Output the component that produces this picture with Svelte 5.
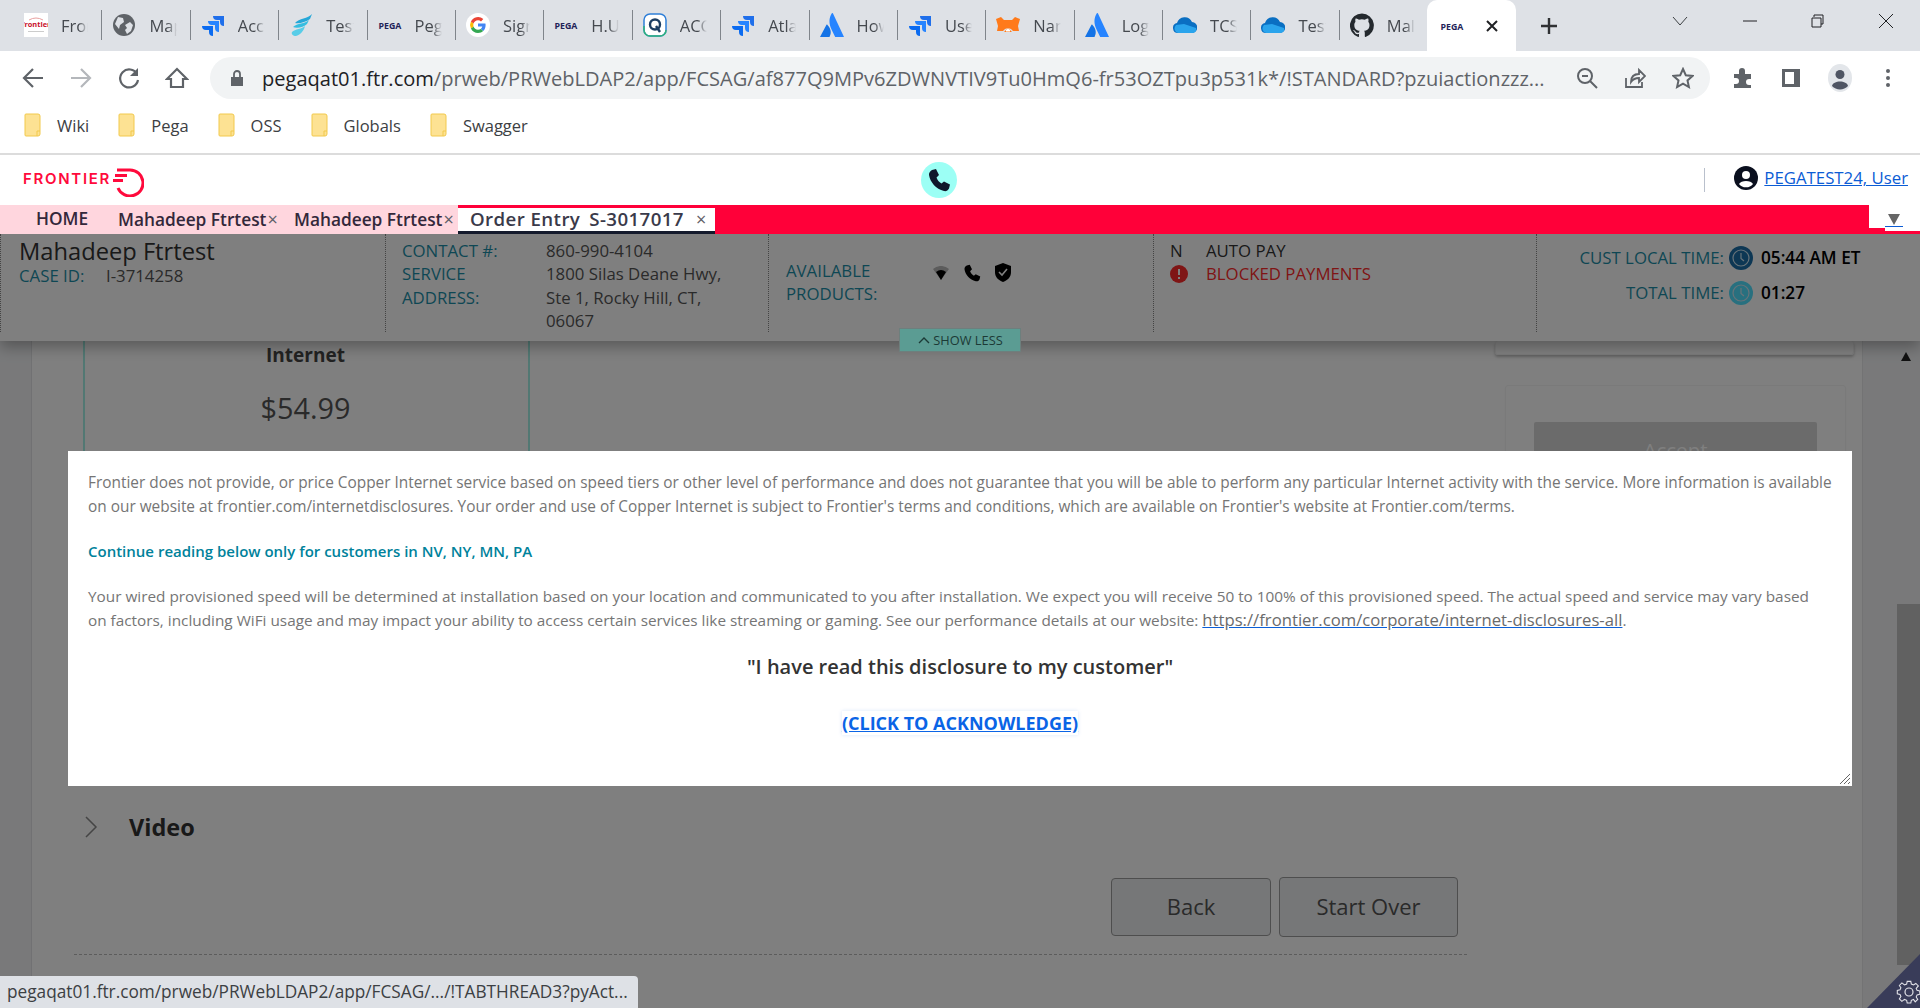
<script>
  const tabs = [
    { icon: "frontier", title: "Frontier" },
    { icon: "globe", title: "Maps" },
    { icon: "jira", title: "Access" },
    { icon: "wing", title: "Test" },
    { icon: "pega", title: "Pega" },
    { icon: "google", title: "Sign" },
    { icon: "pega", title: "H.U" },
    { icon: "qtest", title: "ACC" },
    { icon: "jira", title: "Atlas" },
    { icon: "atlassian", title: "How" },
    { icon: "jira", title: "User" },
    { icon: "fox", title: "Name" },
    { icon: "atlassian", title: "Log" },
    { icon: "cloud", title: "TCS" },
    { icon: "cloud", title: "Test" },
    { icon: "github", title: "Mal" }
  ];
  const bookmarks = ["Wiki", "Pega", "OSS", "Globals", "Swagger"];
</script>

<svg class="defs" aria-hidden="true">
  <symbol id="frontier" viewBox="0 0 24 24">
    <rect width="24" height="24" fill="#fff" />
    <path d="M5 7q7-4 14 0" fill="none" stroke="#e8a0a0" stroke-width="1" />
    <text x="12" y="14" font-size="7.400" font-weight="700" fill="#c8102e" text-anchor="middle" font-family="Open Sans">frontier</text>
    <rect x="4" y="18" width="16" height="1" fill="#ccc" />
  </symbol>
  <symbol id="globe" viewBox="0 0 24 24">
    <circle cx="12" cy="12" r="11" fill="#5f6368" />
    <path d="M6 4l5 1 1 4-4 3-1 4-4-5zM18 9l3 3-2 6-4 3-2-4 2-2-2-3z" fill="#dee1e6" />
  </symbol>
  <symbol id="jira" viewBox="0 0 24 24">
    <path d="M12 3h11v10a4 4 0 0 1-4-4V7h-3a4 4 0 0 1-4-4z" fill="#1f6feb" />
    <path d="M7 8h11v11a4 4 0 0 1-4-4v-3h-3a4 4 0 0 1-4-4z" fill="#2684ff" />
    <path d="M1 13h11v10a4 4 0 0 1-4-4v-2H5a4 4 0 0 1-4-4z" fill="#0b6bf0" />
  </symbol>
  <symbol id="wing" viewBox="0 0 24 24">
    <path d="M23 1C19 6 10 5 6 10c4 1 11-1 15-4z" fill="#25a7d8" />
    <path d="M20 7c-4 4-12 3-16 7 4 2 11 0 14-3z" fill="#35bde0" />
    <path d="M16 13c-3 3-10 3-13 6-1 2 1 4 4 4 4-1 8-5 9-10z" fill="#58cde8" />
  </symbol>
  <symbol id="pega" viewBox="0 0 24 24">
    <text x="12" y="15.500" font-size="8.800" font-weight="700" fill="#1e2358" text-anchor="middle" font-family="Open Sans">PEGA</text>
  </symbol>
  <symbol id="google" viewBox="0 0 24 24">
    <circle cx="12" cy="12" r="12" fill="#fff" />
    <path d="M19.600 12.200c0-.6 0-1.100-.2-1.600H12v3h4.300a3.700 3.700 0 0 1-1.600 2.400l2.500 2c1.500-1.400 2.400-3.400 2.400-5.800z" fill="#4285f4" />
    <path d="M12 20c2.200 0 4-.7 5.200-2l-2.500-2c-.7.500-1.600.8-2.700.8-2.100 0-3.900-1.400-4.500-3.300l-2.600 2A8 8 0 0 0 12 20z" fill="#34a853" />
    <path d="M7.500 13.500a4.800 4.800 0 0 1 0-3l-2.600-2a8 8 0 0 0 0 7z" fill="#fbbc05" />
    <path d="M12 7.200c1.200 0 2.200.4 3 1.200l2.300-2.300A8 8 0 0 0 4.900 8.500l2.600 2c.6-1.900 2.400-3.300 4.500-3.300z" fill="#ea4335" />
  </symbol>
  <symbol id="qtest" viewBox="0 0 24 24">
    <rect x="1" y="1" width="22" height="22" rx="6" fill="#fff" stroke="#2f7fd8" stroke-width="1.500" />
    <path d="M1 13v4a6 6 0 0 0 6 6h10a6 6 0 0 0 6-6" fill="none" stroke="#2fb37c" stroke-width="1.500" />
    <circle cx="12" cy="11.500" r="5" fill="none" stroke="#1d3e63" stroke-width="2.400" />
    <path d="M13 13l4 6" stroke="#1d3e63" stroke-width="2.400" />
  </symbol>
  <symbol id="atlassian" viewBox="0 0 24 24">
    <path d="M7.500 12c-.5-.6-1-.5-1.300.2L0 24h9.500c1.500-3 2.500-7-2-12z" fill="#1473e6" />
    <path d="M12 0c-3.500 5.500-3.300 11 0 17.500L15.200 24H24L13 .5c-.3-.6-.7-.6-1-.5z" fill="#2684ff" />
  </symbol>
  <symbol id="fox" viewBox="0 0 24 24">
    <path d="M0 6l5-2 3 3h8l3-3 5 2-2 7 1 5h-6l-2-2-3-1-3 1-2 2H1l1-5z" fill="#ff7a1a" />
    <path d="M8 19l4-4 4 4z" fill="#ff7a1a" />
    <path d="M10 18.500h4v-1.500l-2-1.500-2 1.500z" fill="#fff" />
  </symbol>
  <symbol id="cloud" viewBox="0 0 24 24">
    <path d="M5 20a5 5 0 0 1-1-9.900A8 8 0 0 1 19 9a5.500 5.500 0 0 1-.5 11z" fill="#0a6fc2" />
    <path d="M3 19c-2-2-2-5 0-7l8-1 12 4c1 3-1 5-4 5H5z" fill="#2aa4ec" />
  </symbol>
  <symbol id="github" viewBox="0 0 24 24">
    <path d="M12 .5a12 12 0 0 0-3.800 23.400c.6.100.8-.3.800-.6v-2.200c-3.300.7-4-1.400-4-1.400-.6-1.400-1.400-1.800-1.400-1.800-1.100-.7.100-.7.100-.7 1.200.1 1.800 1.200 1.800 1.200 1.100 1.800 2.800 1.300 3.500 1 .1-.8.400-1.300.8-1.600-2.700-.3-5.500-1.300-5.500-5.900 0-1.300.5-2.400 1.200-3.200-.1-.3-.5-1.500.1-3.200 0 0 1-.3 3.300 1.200a11.500 11.500 0 0 1 6 0c2.300-1.500 3.300-1.200 3.300-1.200.6 1.700.2 2.900.1 3.200.8.800 1.200 1.900 1.200 3.200 0 4.600-2.800 5.600-5.500 5.900.4.400.8 1.100.8 2.200v3.300c0 .3.200.7.800.6A12 12 0 0 0 12 .5z" fill="#24292e" />
  </symbol>
  <symbol id="folder" viewBox="0 0 17 24">
    <path d="M1 2a1 1 0 0 1 1-1h12a2 2 0 0 1 2 2v18a2 2 0 0 1-2 2H2a1 1 0 0 1-1-1z" fill="#fde293" stroke="#f2c94c" stroke-width="1" />
    <path d="M13 23v-5h3" fill="none" stroke="#f2c94c" stroke-width="1" />
  </symbol>
  <symbol id="clock" viewBox="0 0 24 24">
    <circle cx="12" cy="12" r="12" fill="currentColor" />
    <circle cx="12" cy="12" r="8" fill="none" stroke="#cfe6f2" stroke-width="1.200" />
    <path d="M12 7v5.500l3 2.500" fill="none" stroke="#cfe6f2" stroke-width="1.200" />
  </symbol>
</svg>

<div class="page">
  <div class="tabstrip">
    {#each tabs as tab, i}
      <div class="tab" class:first={i === 0}>
        <svg class="favicon"><use href="#{tab.icon}" /></svg>
        <span class="tab-title">{tab.title}</span>
      </div>
    {/each}
    <div class="tab active">
      <svg class="favicon"><use href="#pega" /></svg>
      <svg class="tab-x" width="14" height="14" viewBox="0 0 14 14"><path d="M2 2l10 10M12 2L2 12" stroke="#202124" stroke-width="2" /></svg>
    </div>
    <svg class="newtab" width="20" height="20" viewBox="0 0 20 20"><path d="M10 2v16M2 10h16" stroke="#303134" stroke-width="2.400" /></svg>
    <div class="winctrl">
      <svg width="18" height="12" viewBox="0 0 18 12"><path d="M2 2l7 8 7-8" fill="none" stroke="#3c4043" stroke-width="1" /></svg>
      <svg width="16" height="12" viewBox="0 0 16 12"><path d="M1 6h14" stroke="#202124" stroke-width="1" /></svg>
      <svg width="16" height="16" viewBox="0 0 16 16"><path d="M4 4V2h9v9h-2M2 5h9v9H2z" fill="none" stroke="#202124" stroke-width="1" /></svg>
      <svg width="16" height="16" viewBox="0 0 16 16"><path d="M1 1l14 14M15 1L1 15" stroke="#202124" stroke-width="1" /></svg>
    </div>
  </div>

  <div class="toolbar">
    <div class="nav">
      <svg width="24" height="24" viewBox="0 0 24 24"><path d="M22 12H4M12 3l-9 9 9 9" fill="none" stroke="#5f6368" stroke-width="2.200" /></svg>
      <svg width="24" height="24" viewBox="0 0 24 24"><path d="M2 12h18M12 3l9 9-9 9" fill="none" stroke="#b4b7bb" stroke-width="2.200" /></svg>
      <svg width="24" height="24" viewBox="0 0 24 24"><path d="M20 8a9 9 0 1 0 1 6" fill="none" stroke="#5f6368" stroke-width="2.200" /><path d="M21 2v8h-8z" fill="#5f6368" /></svg>
      <svg width="24" height="24" viewBox="0 0 24 24"><path d="M12 3L2 13h4v8h12v-8h4z" fill="none" stroke="#5f6368" stroke-width="2.200" /></svg>
    </div>
    <div class="omnibox">
      <svg class="lock" width="14" height="18" viewBox="0 0 14 18"><path d="M1 8h12v9H1z" fill="#5f6368" /><path d="M4 8V5a3 3 0 0 1 6 0v3" fill="none" stroke="#5f6368" stroke-width="1.800" /></svg>
      <span class="url"><b>pegaqat01.ftr.com</b>/prweb/PRWebLDAP2/app/FCSAG/af877Q9MPv6ZDWNVTIV9Tu0HmQ6-fr53OZTpu3p531k*/!STANDARD?pzuiactionzzz...</span>
      <div class="omni-icons">
        <svg width="22" height="22" viewBox="0 0 22 22"><circle cx="9" cy="9" r="7" fill="none" stroke="#5f6368" stroke-width="2" /><path d="M14 14l7 7M6 9h6" stroke="#5f6368" stroke-width="2" /></svg>
        <svg width="22" height="22" viewBox="0 0 22 22"><path d="M2 11v9h16v-5M7 15c0-6 4-8 8-8V3l6 6-6 6v-4c-4 0-6 1-8 4z" fill="none" stroke="#5f6368" stroke-width="1.800" /></svg>
        <svg width="22" height="22" viewBox="0 0 22 22"><path d="M11 2l2.800 6.200 6.700.7-5 4.500 1.400 6.600-5.900-3.400L5.100 20l1.400-6.600-5-4.500 6.700-.7z" fill="none" stroke="#5f6368" stroke-width="2" /></svg>
      </div>
    </div>
    <div class="tools">
      <svg width="22" height="22" viewBox="0 0 22 22"><path d="M2 7h5V4a3 3 0 0 1 6 0v3h6v5h-2a3 3 0 0 0 0 6h2v3H2v-4h2a3 3 0 0 0 0-6H2z" fill="#5f6368" /></svg>
      <svg width="20" height="20" viewBox="0 0 20 20"><path d="M1 1h18v18H1zM4 4v12h9V4z" fill="#5f6368" fill-rule="evenodd" /></svg>
      <svg width="24" height="28" viewBox="0 0 24 28"><ellipse cx="12" cy="14" rx="12" ry="14" fill="#e3e6ea" /><circle cx="12" cy="10.500" r="4.500" fill="#4f5563" /><path d="M4 22c1-6 15-6 16 0a11 11 0 0 1-16 0z" fill="#4f5563" /></svg>
      <svg class="menu-dots" width="6" height="20" viewBox="0 0 6 20"><circle cx="3" cy="3" r="2" fill="#5f6368" /><circle cx="3" cy="10" r="2" fill="#5f6368" /><circle cx="3" cy="17" r="2" fill="#5f6368" /></svg>
    </div>
  </div>

  <div class="bookmarks">
    {#each bookmarks as name}
      <div class="bookmark">
        <svg width="17" height="24"><use href="#folder" /></svg>
        <span>{name}</span>
      </div>
    {/each}
  </div>

  <header class="brand">
    <div class="logo">
      <span>FRONTIER</span>
      <svg width="32" height="30" viewBox="0 0 32 30">
        <path d="M5 3h13a13 13 0 1 1-12 18" fill="none" stroke="#ff0a3c" stroke-width="3" />
        <path d="M3 8.500h12M1 13.500h10" stroke="#ff0a3c" stroke-width="2.800" />
      </svg>
    </div>
    <div class="call">
      <svg width="24" height="24" viewBox="0 0 24 24"><path d="M5 2l4-1 3 6-2.500 2.500c.8 2.500 2.500 4.500 5 6l2.500-2 6 3-1 4c-1 2-3 3-5 2.500C9 21 3 14 2 7c-.2-2 1-4 3-5z" fill="#10182b" /></svg>
    </div>
    <div class="user">
      <svg width="24" height="24" viewBox="0 0 24 24"><circle cx="12" cy="12" r="12" fill="#0a0f1e" /><circle cx="12" cy="9" r="4" fill="#fff" /><path d="M5 18c2-4 12-4 14 0a9 9 0 0 1-14 0z" fill="#fff" /></svg>
      <a href="#user">PEGATEST24, User</a>
    </div>
  </header>

  <nav class="apptabs">
    <div class="soft-tabs">
      <span class="home">HOME</span>
      <span class="soft">Mahadeep Ftrtest<i>×</i></span>
      <span class="soft">Mahadeep Ftrtest<i>×</i></span>
    </div>
    <div class="order-tab">
      <span>Order Entry</span><span>S-3017017</span><i>×</i>
    </div>
    <div class="tab-menu"><a href="#menu"><span></span></a></div>
  </nav>

  <main class="work">
    <section class="summary">
      <div class="cell who">
        <h1>Mahadeep Ftrtest</h1>
        <div class="pair"><label>CASE ID:</label><span>I-3714258</span></div>
      </div>
      <div class="cell contact">
        <label>CONTACT #:</label><span>860-990-4104</span>
        <label>SERVICE ADDRESS:</label><span>1800 Silas Deane Hwy, Ste 1, Rocky Hill, CT, 06067</span>
      </div>
      <div class="cell products">
        <label>AVAILABLE PRODUCTS:</label>
        <div class="prod-icons">
          <svg width="16" height="14" viewBox="0 0 16 14"><path d="M0 3a12 12 0 0 1 16 0L8 14z" fill="#b8b8b8" /><path d="M3 6a8 8 0 0 1 10 0L8 14z" fill="#000" /></svg>
          <svg width="18" height="18" viewBox="0 0 24 24"><path d="M5 2l4-1 3 6-2.500 2.500c.8 2.500 2.500 4.500 5 6l2.500-2 6 3-1 4c-1 2-3 3-5 2.500C9 21 3 14 2 7c-.2-2 1-4 3-5z" fill="#000" /></svg>
          <svg width="16" height="19" viewBox="0 0 16 19"><path d="M8 0l8 3v6c0 5-3 8-8 10-5-2-8-5-8-10V3z" fill="#000" /><path d="M4 9l3 3 5-6" fill="none" stroke="#fff" stroke-width="1.600" /></svg>
        </div>
      </div>
      <div class="cell flags">
        <div><span class="flag-mark">N</span><span>AUTO PAY</span></div>
        <div class="blocked">
          <span class="flag-mark"><svg width="18" height="18" viewBox="0 0 18 18"><circle cx="9" cy="9" r="9" fill="#ff2a2a" /><path d="M9 4v6M9 12v2" stroke="#fff" stroke-width="2" /></svg></span>
          <span>BLOCKED PAYMENTS</span>
        </div>
      </div>
      <div class="cell times">
        <label>CUST LOCAL TIME:</label>
        <svg class="dark-clock" width="24" height="24"><use href="#clock" /></svg>
        <b>05:44 AM ET</b>
        <label>TOTAL TIME:</label>
        <svg class="light-clock" width="24" height="24"><use href="#clock" /></svg>
        <b>01:27</b>
      </div>
    </section>

    <div class="scroller">
      <div class="gutter"></div>
      <div class="content">
        <div class="offer-row">
          <div class="offer">
            <h2>Internet</h2>
            <div class="price">$54.99</div>
          </div>
          <div class="side">
            <div class="side-card top"></div>
            <div class="side-card"><div class="accept">Accept</div></div>
          </div>
        </div>
        <div class="video">
          <svg width="14" height="24" viewBox="0 0 14 24"><path d="M2 2l10 10L2 22" fill="none" stroke="#8a8a8a" stroke-width="1.500" /></svg>
          <h3>Video</h3>
        </div>
        <div class="actions">
          <button class="back">Back</button>
          <button class="over">Start Over</button>
        </div>
        <div class="rule"></div>
      </div>
      <div class="scrollbar">
        <span class="arrow"></span>
        <span class="thumb"></span>
      </div>
    </div>

    <div class="overlay"></div>

    <div class="show-less">
      <svg width="14" height="10" viewBox="0 0 14 10"><path d="M2 8l5-5 5 5" fill="none" stroke="#1c3a36" stroke-width="1.400" /></svg>
      SHOW LESS
    </div>

    <div class="modal">
      <p>Frontier does not provide, or price Copper Internet service based on speed tiers or other level of performance and does not guarantee that you will be able to perform any particular Internet activity with the service. More information is available on our website at frontier.com/internetdisclosures. Your order and use of Copper Internet is subject to Frontier's terms and conditions, which are available on Frontier's website at Frontier.com/terms.</p>
      <p class="note">Continue reading below only for customers in NV, NY, MN, PA</p>
      <p class="speed">Your wired provisioned speed will be determined at installation based on your location and communicated to you after installation. We expect you will receive 50 to 100% of this provisioned speed. The actual speed and service may vary based on factors, including WiFi usage and may impact your ability to access certain services like streaming or gaming. See our performance details at our website: <a class="plain" href="#disclosures">https://frontier.com/corporate/internet-disclosures-all</a>.</p>
      <div class="confirm">"I have read this disclosure to my customer"</div>
      <div class="ack"><a href="#ack">(CLICK TO ACKNOWLEDGE)</a></div>
      <svg class="grip" width="12" height="12" viewBox="0 0 12 12"><path d="M11 1L1 11M11 5l-6 6M11 9l-2 2" stroke="#666" stroke-width="1" /></svg>
    </div>

    <div class="gear">
      <svg width="26" height="26" viewBox="0 0 26 26"><circle cx="13" cy="13" r="4" fill="none" stroke="#e4e4ea" stroke-width="1.200" /><path d="M11 2h4l.6 3 2.400 1 2.600-1.700 2.800 2.800L21 9.700l1 2.300 3 .6v3.800l-3 .6-1 2.400 1.700 2.600-2.800 2.800L18 22l-2.400 1-.6 3h-4l-.6-3L8 22l-2.900 2.200-2.800-2.800L4 18.800 3 16.400 0 15.800V12l3-.6 1-2.300-1.700-2.600 2.800-2.800L8 6l2.400-1z" fill="none" stroke="#e4e4ea" stroke-width="1.200" transform="translate(1.300 .6) scale(.9)" /></svg>
    </div>

    <div class="status">pegaqat01.ftr.com/prweb/PRWebLDAP2/app/FCSAG/.../!TABTHREAD3?pyAct...</div>
  </main>
</div>

<style>
  :global(body) {
    margin: 0;
    font-family: "Open Sans", "Noto Sans", sans-serif;
    background: #fff;
  }
  .defs {
    position: absolute;
    width: 0;
    height: 0;
  }
  .page {
    height: 1008px;
    display: flex;
    flex-direction: column;
    overflow: hidden;
  }

  /* browser chrome */
  .tabstrip {
    height: 51px;
    flex: none;
    background: #dee1e6;
    display: flex;
    padding-left: 14px;
    box-sizing: border-box;
    align-items: flex-end;
  }
  .tab {
    width: 88.400px;
    height: 30px;
    margin-bottom: 11px;
    box-sizing: border-box;
    display: flex;
    align-items: center;
    gap: 13px;
    padding: 0 13px 0 10px;
    border-right: 1px solid #80858b;
    font-size: 16.500px;
    color: #45494f;
    overflow: hidden;
    flex: none;
  }
  .tab:nth-child(16) {
    border-right: none;
  }
  .favicon {
    width: 24px;
    height: 24px;
    flex: none;
  }
  .tab-title {
    white-space: nowrap;
    overflow: hidden;
    flex: 1;
    -webkit-mask-image: linear-gradient(90deg, #000 65%, transparent);
    mask-image: linear-gradient(90deg, #000 65%, transparent);
  }
  .tab.active {
    width: 89px;
    height: 51px;
    margin: 0;
    background: #fff;
    border: none;
    border-radius: 10px 10px 0 0;
    padding: 0 0 0 13px;
    gap: 21px;
    margin-left: -1px;
  }
  .tab-x {
    flex: none;
  }
  .newtab {
    margin: 0 0 15px 23px;
  }
  .winctrl {
    margin-left: 112px;
    width: 223px;
    height: 51px;
    display: flex;
    align-items: center;
    justify-content: space-between;
    padding-bottom: 10px;
    box-sizing: border-box;
  }
  .toolbar {
    height: 54px;
    flex: none;
    display: flex;
    align-items: center;
    background: #fff;
  }
  .nav {
    display: flex;
    gap: 24px;
    padding-left: 21px;
    width: 210px;
    flex: none;
    box-sizing: border-box;
  }
  .omnibox {
    width: 1500px;
    height: 42px;
    flex: none;
    background: #f1f3f4;
    border-radius: 21px;
    display: flex;
    align-items: center;
    padding-left: 20px;
    box-sizing: border-box;
  }
  .lock {
    margin-right: 18px;
    flex: none;
  }
  .url {
    width: 1289px;
    font-size: 20.060px;
    color: #5f6368;
    white-space: nowrap;
    overflow: hidden;
    flex: none;
  }
  .url b {
    font-weight: 400;
    color: #202124;
  }
  .omni-icons {
    display: flex;
    gap: 26px;
    margin-left: 25px;
  }
  .tools {
    display: flex;
    align-items: center;
    gap: 27px;
    padding-left: 22px;
  }
  .menu-dots {
    margin-left: 6px;
  }
  .bookmarks {
    height: 40px;
    padding: 0 0 8px 24px;
    flex: none;
    display: flex;
    align-items: center;
    gap: 29px;
    font-size: 16.500px;
    color: #3c4043;
    border-bottom: 2px solid #dcdcdc;
  }
  .bookmark {
    display: flex;
    align-items: center;
    gap: 16px;
  }

  /* app header */
  .brand {
    height: 50px;
    flex: none;
    display: flex;
    align-items: center;
    position: relative;
    background: #fff;
    padding-left: 23px;
  }
  .logo {
    display: flex;
    align-items: center;
    color: #ff0a3c;
    font-family: Inter, "Open Sans", sans-serif;
    font-weight: 600;
    font-size: 15px;
    letter-spacing: 1.700px;
    width: 898px;
    flex: none;
  }
  .logo span {
    width: 89px;
    flex: none;
    white-space: nowrap;
    margin-top: -4px;
  }
  .logo svg {
    margin-top: 3px;
  }
  .call {
    width: 36px;
    height: 36px;
    border-radius: 50%;
    background: #9cfff5;
    display: flex;
    align-items: center;
    justify-content: center;
    flex: none;
  }
  .user {
    margin-left: auto;
    display: flex;
    align-items: center;
    gap: 6px;
    padding: 0 12px 0 29px;
    border-left: 1px solid #b9c0cc;
    height: 24px;
    font-size: 16.800px;
  }
  .user svg {
    margin-top: -5px;
  }
  .user a {
    color: #0b5cd5;
    margin-top: -5px;
  }
  .apptabs {
    height: 29px;
    flex: none;
    background: #ff0039;
    display: flex;
    position: relative;
  }
  .soft-tabs {
    width: 458px;
    flex: none;
    background: #ffd6de;
    display: flex;
    align-items: center;
    font-weight: 600;
    font-size: 17.300px;
    color: #33283a;
    white-space: nowrap;
    padding-bottom: 2px;
    box-sizing: border-box;
  }
  .home {
    margin-left: 36px;
    width: 82px;
    flex: none;
  }
  .soft {
    width: 176px;
    flex: none;
  }
  .soft i, .order-tab i {
    font-style: normal;
    font-weight: 400;
    color: #5f5f68;
    font-size: 18px;
    margin-left: 1px;
  }
  .order-tab {
    width: 257px;
    flex: none;
    box-sizing: border-box;
    margin-top: 3px;
    background: #fff;
    border-bottom: 3px solid #141a2c;
    display: flex;
    align-items: center;
    padding: 0 0 1px 12px;
    gap: 9px;
    font-size: 18.700px;
    line-height: 22px;
    font-weight: 600;
    color: #3a3a4a;
    letter-spacing: 0.400px;
    white-space: nowrap;
  }
  .order-tab i {
    margin-left: 3px;
  }
  .tab-menu {
    margin-left: auto;
    width: 51px;
    height: 26px;
    background: #fff;
    display: flex;
    padding: 9px 0 0 16px;
    box-sizing: border-box;
    clip-path: polygon(0 0, 100% 0, 100% 100%, 16px 100%, 16px 23px, 0 23px);
  }
  .tab-menu a {
    width: 18px;
    height: 12px;
    display: flex;
    justify-content: center;
    border-bottom: 1px solid #0b5cd5;
  }
  .tab-menu span {
    width: 0;
    height: 0;
    border-left: 6px solid transparent;
    border-right: 6px solid transparent;
    border-top: 11px solid #666;
  }

  /* case work area */
  .work {
    flex: 1;
    position: relative;
    display: flex;
    flex-direction: column;
    overflow: hidden;
    min-height: 0;
    background: #fff;
  }
  .summary {
    height: 107px;
    flex: none;
    box-sizing: border-box;
    padding-bottom: 9px;
    display: grid;
    grid-template-columns: 385px 383px 385px 383px 1fr;
    background: #fff;
    box-shadow: 0 6px 14px rgba(0, 0, 0, 0.3);
    position: relative;
    z-index: 1;
    font-size: 16.800px;
    line-height: 23.300px;
    color: #555;
  }
  .cell {
    border-left: 1px dotted #888;
    box-sizing: border-box;
    min-width: 0;
  }
  .summary label {
    color: #1d8fa8;
  }
  .who {
    padding-left: 18px;
  }
  .who h1 {
    font-size: 23.700px;
    font-weight: 400;
    line-height: 28px;
    margin: 3px 0 0;
    color: #333;
  }
  .pair {
    display: grid;
    grid-template-columns: 87px 1fr;
    margin-top: -1px;
  }
  .contact {
    display: grid;
    grid-template-columns: 144px 1fr;
    align-content: start;
    padding: 5px 0 0 16px;
  }
  .contact label {
    padding-right: 40px;
  }
  .contact span {
    padding-right: 30px;
  }
  .products {
    display: grid;
    grid-template-columns: 152px 1fr;
    padding: 25px 0 0 17px;
    align-content: start;
  }
  .products label {
    padding-right: 40px;
  }
  .prod-icons {
    display: flex;
    align-items: center;
    gap: 14px;
    height: 23px;
    margin-top: 2px;
    margin-left: -5px;
  }
  .flags {
    padding: 5px 0 0 16px;
  }
  .flags > div {
    display: flex;
  }
  .flag-mark {
    width: 36px;
    flex: none;
    display: flex;
    align-items: center;
    color: #333;
  }
  .flags span:last-child {
    color: #333;
  }
  .flags .blocked span:last-child {
    color: #ff2a2a;
  }
  .times {
    display: grid;
    grid-template-columns: 187px 24px auto;
    column-gap: 5px;
    row-gap: 11px;
    align-content: start;
    align-items: center;
    padding-top: 12px;
  }
  .times label {
    text-align: right;
    white-space: nowrap;
  }
  .times b {
    color: #000;
    font-weight: 600;
    font-size: 17.200px;
    padding-left: 3px;
    white-space: nowrap;
  }
  .dark-clock {
    color: #1a6ea8;
  }
  .light-clock {
    color: #50e0ff;
  }

  .scroller {
    flex: 1;
    min-height: 0;
    display: flex;
  }
  .gutter {
    width: 31px;
    flex: none;
    background: #f2f3f5;
    border-right: 1px solid #e2e3e6;
  }
  .content {
    width: 1830px;
    flex: none;
    min-width: 0;
    padding: 0 0 0 42px;
    box-sizing: border-box;
  }
  .offer-row {
    height: 460px;
    display: flex;
    align-items: flex-start;
    overflow: hidden;
  }
  .offer {
    margin-left: 9px;
    width: 447px;
    height: 120px;
    box-sizing: border-box;
    border-left: 2px solid #a5f0e6;
    border-right: 2px solid #a5f0e6;
    text-align: center;
    flex: none;
  }
  .offer h2 {
    font-size: 19px;
    line-height: 28px;
    margin: 0 0 0 -2px;
    font-weight: 700;
    color: #444;
  }
  .price {
    font-size: 28.800px;
    line-height: 38px;
    margin: 20px 0 0 -2px;
    color: #555;
  }
  .side {
    margin-left: 965px;
    width: 359px;
    flex: none;
  }
  .side-card {
    box-sizing: border-box;
    margin: 30px 8px 0 10px;
    height: 200px;
    border: 1px solid #f4f4f4;
    border-radius: 3px;
    padding: 36px 28px 0;
    box-shadow: 0 1px 2px rgba(0, 0, 0, 0.04);
  }
  .side-card.top {
    margin: 0;
    height: 14px;
    padding: 0;
    border-top: none;
    box-shadow: 0 2px 3px rgba(0, 0, 0, 0.25);
  }
  .accept {
    height: 60px;
    border-radius: 2px;
    background: #d6d6d6;
    color: #fff;
    text-align: center;
    font-size: 20.500px;
    line-height: 57px;
  }
  .video {
    margin: 14px 0 0 10px;
    display: flex;
    align-items: center;
    gap: 31px;
    height: 24px;
  }
  .video h3 {
    font-size: 23.500px;
    font-weight: 700;
    margin: 0;
    color: #333;
  }
  .actions {
    display: flex;
    gap: 8px;
    align-items: center;
    margin: 38px 0 0 1037px;
  }
  .actions button {
    font-family: inherit;
    font-size: 22px;
    line-height: 26px;
    color: #555;
    background: #eceef0;
    border: 1px solid #9c9c9c;
    border-radius: 4px;
    padding: 0 0 3px;
    box-sizing: border-box;
  }
  .back {
    width: 160px;
    height: 58px;
  }
  .over {
    width: 179px;
    height: 60px;
  }
  .rule {
    width: 1393px;
    margin-top: 17px;
    border-top: 1px dashed #b9b9b9;
  }
  .scrollbar {
    width: 58px;
    flex: none;
    box-sizing: border-box;
    border-left: 1px solid #e6e7e9;
    background: #f2f3f5;
    position: relative;
  }
  .arrow {
    position: absolute;
    left: 38px;
    top: 11px;
    width: 0;
    height: 0;
    border-left: 5px solid transparent;
    border-right: 5px solid transparent;
    border-bottom: 9px solid #222;
  }
  .thumb {
    position: absolute;
    left: 34px;
    width: 23px;
    top: 263px;
    height: 361px;
    background: #c2c2c2;
  }

  .overlay {
    position: absolute;
    inset: 0;
    background: rgba(0, 0, 0, 0.5);
    z-index: 2;
  }
  .show-less {
    position: absolute;
    left: 899px;
    top: 94px;
    width: 122px;
    height: 24px;
    box-sizing: border-box;
    z-index: 3;
    background: #5b9c93;
    border: 1px solid #6d7f7d;
    font-size: 12.800px;
    color: #1c3a36;
    display: flex;
    align-items: center;
    justify-content: center;
    gap: 2px;
    white-space: nowrap;
  }
  .modal {
    position: absolute;
    left: 68px;
    top: 217px;
    width: 1784px;
    height: 335px;
    box-sizing: border-box;
    z-index: 4;
    background: #fff;
    padding: 20px 20px 0;
    font-size: 15.400px;
    line-height: 23.500px;
    color: #757575;
  }
  .modal p {
    margin: 0 0 21.500px;
  }
  .modal p.note {
    font-size: 15px;
    color: #00829b;
    font-weight: 600;
  }
  .modal p.speed {
    font-size: 15.340px;
    padding-right: 22px;
  }
  .plain {
    color: #6b6b6b;
    text-decoration-color: #0a5fd8;
    font-size: 16.700px;
  }
  .confirm {
    text-align: center;
    font-size: 20px;
    font-weight: 600;
    color: #333;
    margin-top: -1px;
    line-height: 28px;
  }
  .ack {
    text-align: center;
    margin-top: 28px;
    font-size: 18px;
    font-weight: 700;
    line-height: 28px;
  }
  .ack a {
    color: #0a64e6;
    box-shadow: 0 0 4px rgba(10, 100, 230, 0.15);
  }
  .grip {
    position: absolute;
    right: 1px;
    bottom: 1px;
  }
  .gear {
    position: absolute;
    right: 0;
    bottom: 0;
    width: 53px;
    height: 54px;
    z-index: 5;
    background: #393c59;
    clip-path: polygon(100% 0, 100% 100%, 0 100%);
    display: flex;
    align-items: flex-end;
    justify-content: flex-end;
  }
  .gear svg {
    margin-bottom: 3px;
    transform: translateX(2px);
  }
  .status {
    position: absolute;
    left: 0;
    bottom: 0;
    width: 638px;
    height: 32px;
    box-sizing: border-box;
    background: #dee1e6;
    border-radius: 0 4px 0 0;
    z-index: 6;
    padding-left: 7px;
    font-size: 17.240px;
    line-height: 32px;
    color: #3c4043;
    white-space: nowrap;
  }
</style>
